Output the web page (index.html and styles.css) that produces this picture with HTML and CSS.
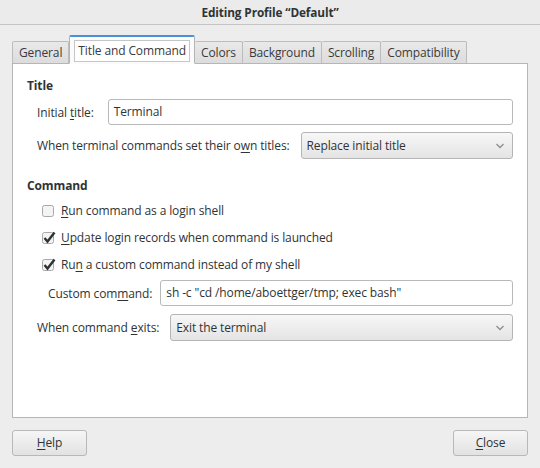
FILE: index.html
```html
<!DOCTYPE html>
<html>
<head>
<meta charset="utf-8">
<link rel="stylesheet" href="styles.css">
</head>
<body>
<div class="window">
  <div class="titlebar">Editing Profile “Default”</div>
  <div class="notebook">
    <div class="tabs">
      <div class="tab">General</div>
      <div class="tab active"><span class="focus">Title and Command</span></div>
      <div class="tab">Colors</div>
      <div class="tab">Background</div>
      <div class="tab">Scrolling</div>
      <div class="tab">Compatibility</div>
    </div>
    <div class="panel">
      <div class="heading">Title</div>
      <div class="row r-initial">
        <span class="label">Initial <u>t</u>itle:</span>
        <div class="entry">Terminal</div>
      </div>
      <div class="row r-when">
        <span class="label">When terminal commands set their o<u>w</u>n titles:</span>
        <div class="combo"><span>Replace initial title</span>
          <svg class="chev" width="10" height="6" viewBox="0 0 10 6"><path d="M1.5 1 L5 4.5 L8.5 1" fill="none" stroke="#8f8f8f" stroke-width="1.3"/></svg>
        </div>
      </div>
      <div class="heading h-command">Command</div>
      <div class="check r-c1">
        <svg class="cb" width="16" height="16" viewBox="0 0 16 16"><rect x="1.5" y="2.5" width="11" height="11" rx="2" fill="#f4f4f4" stroke="#a8a8a8"/></svg>
        <span><u>R</u>un command as a login shell</span>
      </div>
      <div class="check">
        <svg class="cb" width="16" height="16" viewBox="0 0 16 16"><rect x="1.5" y="2.5" width="11" height="11" rx="2" fill="#f4f4f4" stroke="#a8a8a8"/><path d="M3.5 8 L6.5 11.5 L13.5 2.5" fill="none" stroke="#2e3436" stroke-width="2.4"/></svg>
        <span><u>U</u>pdate login records when command is launched</span>
      </div>
      <div class="check">
        <svg class="cb" width="16" height="16" viewBox="0 0 16 16"><rect x="1.5" y="2.5" width="11" height="11" rx="2" fill="#f4f4f4" stroke="#a8a8a8"/><path d="M3.5 8 L6.5 11.5 L13.5 2.5" fill="none" stroke="#2e3436" stroke-width="2.4"/></svg>
        <span>Ru<u>n</u> a custom command instead of my shell</span>
      </div>
      <div class="row r-custom">
        <span class="label">Custom com<u>m</u>and:</span>
        <div class="entry">sh -c "cd /home/aboettger/tmp; exec bash"</div>
      </div>
      <div class="row r-exits">
        <span class="label">When command <u>e</u>xits:</span>
        <div class="combo"><span>Exit the terminal</span>
          <svg class="chev" width="10" height="6" viewBox="0 0 10 6"><path d="M1.5 1 L5 4.5 L8.5 1" fill="none" stroke="#8f8f8f" stroke-width="1.3"/></svg>
        </div>
      </div>
    </div>
  </div>
  <div class="buttons">
    <div class="button"><u>H</u>elp</div>
    <div class="button"><u>C</u>lose</div>
  </div>
</div>
</body>
</html>
```

FILE: styles.css
```css
html, body {
  margin: 0;
  padding: 0;
}
body {
  width: 540px;
  height: 468px;
  background: #ededed;
  font-family: "Open Sans", "Noto Sans", sans-serif;
  font-size: 12px;
  letter-spacing: -0.12px;
  color: #2e3436;
  overflow: hidden;
}
u {
  text-decoration: underline;
  text-underline-offset: 2px;
  text-decoration-thickness: 1px;
}
.window {
  width: 540px;
  height: 468px;
  display: flex;
  flex-direction: column;
}
.titlebar {
  height: 24px;
  line-height: 25px;
  text-align: center;
  font-weight: bold;
  font-size: 11.8px;
  border-bottom: 1px solid #c4c4c4;
  background: #ebebeb;
}
.notebook {
  margin: 11px 12px 0 12px;
}
.tabs {
  display: flex;
  align-items: flex-end;
  height: 27px;
  position: relative;
  z-index: 1;
}
.tab {
  height: 21px;
  line-height: 21px;
  padding: 0 6px;
  border: 1px solid #bcbcbc;
  border-bottom: none;
  border-left: none;
  background: linear-gradient(#e9e9e9, #dcdcdc);
  border-radius: 2px 2px 0 0;
  color: #3a3a3a;
}
.tab:first-child {
  border-left: 1px solid #bcbcbc;
}
.tab.active {
  height: 26px;
  padding: 0 4px;
  background: #fbfbfb;
  border: 1px solid #b4b4b4;
  border-top: 2px solid #4a90d9;
  border-bottom: 1px solid #fbfbfb;
  margin-bottom: -1px;
  display: flex;
  align-items: center;
}
.focus {
  display: block;
  border: 1px solid #c6c6c6;
  background: #ffffff;
  height: 20px;
  line-height: 20px;
  padding: 0 3px;
  margin-top: 1px;
}
.panel {
  background: #ffffff;
  border: 1px solid #b6b6b6;
  height: 339px;
  padding: 14px 14px 0 14px;
}
.heading {
  font-weight: bold;
  height: 16px;
  line-height: 16px;
}
.h-command {
  margin-top: 19px;
}
.row {
  display: flex;
  align-items: center;
  gap: 12px;
  margin-left: 10px;
}
.r-initial { margin-top: 5px; gap: 14px; }
.r-when { margin-top: 7px; gap: 11px; }
.r-custom { margin-top: 2px; margin-left: 21px; gap: 8px; }
.r-exits { margin-top: 8px; gap: 11px; }
.entry {
  flex: 1;
  height: 26px;
  box-sizing: border-box;
  border: 1px solid #b9b9b9;
  border-radius: 3px;
  background: #ffffff;
  line-height: 24px;
  padding: 0 5px;
}
.combo {
  flex: 1;
  height: 27px;
  box-sizing: border-box;
  border: 1px solid #b5b5b5;
  border-radius: 3px;
  background: linear-gradient(#f7f7f7, #e4e4e4);
  padding: 0 5px 0 5px;
  display: flex;
  align-items: center;
  justify-content: space-between;
}
.chev {
  margin-right: 2px;
}
.check {
  display: flex;
  align-items: center;
  height: 27px;
  margin-left: 14px;
  gap: 4px;
}
.r-c1 { margin-top: 3px; }
.cb { flex: none; }
.buttons {
  display: flex;
  justify-content: space-between;
  padding: 12px 12px 0 12px;
}
.button {
  width: 73px;
  height: 24px;
  line-height: 24px;
  text-align: center;
  border: 1px solid #b8b8b8;
  border-radius: 3px;
  background: linear-gradient(#f6f6f6, #e2e2e2);
}
```
